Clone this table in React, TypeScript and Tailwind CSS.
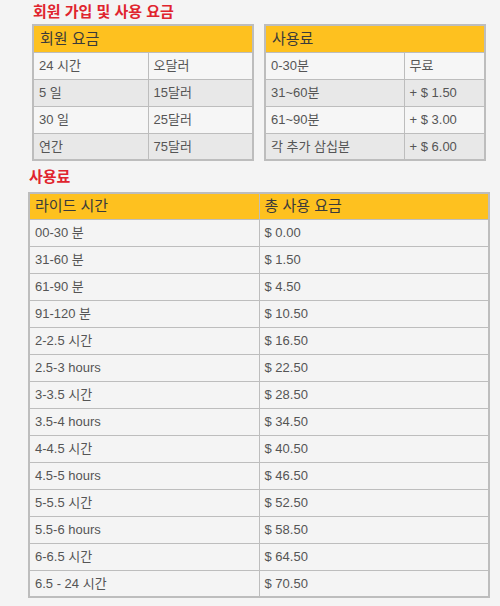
const font = { fontFamily: '"Liberation Sans", "Noto Sans CJK KR", sans-serif' };

const membership = [
  ['24 시간', '오달러'],
  ['5 일', '15달러'],
  ['30 일', '25달러'],
  ['연간', '75달러'],
];

const usage = [
  ['0-30분', '무료'],
  ['31~60분', '+ $ 1.50'],
  ['61~90분', '+ $ 3.00'],
  ['각 추가 삼십분', '+ $ 6.00'],
];

const rides = [
  ['00-30 분', '$ 0.00'],
  ['31-60 분', '$ 1.50'],
  ['61-90 분', '$ 4.50'],
  ['91-120 분', '$ 10.50'],
  ['2-2.5 시간', '$ 16.50'],
  ['2.5-3 hours', '$ 22.50'],
  ['3-3.5 시간', '$ 28.50'],
  ['3.5-4 hours', '$ 34.50'],
  ['4-4.5 시간', '$ 40.50'],
  ['4.5-5 hours', '$ 46.50'],
  ['5-5.5 시간', '$ 52.50'],
  ['5.5-6 hours', '$ 58.50'],
  ['6-6.5 시간', '$ 64.50'],
  ['6.5 - 24 시간', '$ 70.50'],
];

function SmallTable({ title, rows, firstCol }: { title: string; rows: string[][]; firstCol: string }) {
  return (
    <table className="w-[222px] border-collapse border-2 border-[#bdbdbd] text-[13px] text-[#555]">
      <thead>
        <tr>
          <th colSpan={2} className="h-[27px] bg-[#fec11f] px-[6px] text-left text-[15px] font-normal text-[#3a3a3a]">
            {title}
          </th>
        </tr>
      </thead>
      <tbody>
        {rows.map((r, i) => (
          <tr key={i} className={i % 2 === 0 ? 'bg-[#f6f6f6]' : 'bg-[#e8e8e8]'}>
            <td className={`h-[27px] border border-[#bdbdbd] px-[5px] ${firstCol}`}>{r[0]}</td>
            <td className="h-[27px] border border-[#bdbdbd] px-[5px]">{r[1]}</td>
          </tr>
        ))}
      </tbody>
    </table>
  );
}

export default function App() {
  return (
    <div className="min-h-[606px] w-[500px] bg-[#f4f4f4]" style={font}>
      <h2 className="pl-[33px] pt-[2px] text-[15px] font-semibold leading-[20px] text-[#e0242e]">회원 가입 및 사용 요금</h2>
      <div className="mt-[2px] flex gap-[10px] pl-[32px]">
        <SmallTable title="회원 요금" rows={membership} firstCol="w-[115px]" />
        <SmallTable title="사용료" rows={usage} firstCol="w-[139px]" />
      </div>
      <h2 className="mt-[6px] pl-[29px] text-[15px] font-semibold leading-[20px] text-[#e0242e]">사용료</h2>
      <div className="mt-[5px] pl-[28px]">
        <table className="w-[462px] border-collapse border-2 border-[#bdbdbd] text-[13px] text-[#555]">
          <thead>
            <tr className="bg-[#fec11f] text-[15px] text-[#3a3a3a]">
              <th className="h-[26px] w-[230px] border border-[#bdbdbd] px-[5px] text-left font-normal">라이드 시간</th>
              <th className="h-[26px] border border-[#bdbdbd] px-[5px] text-left font-normal">총 사용 요금</th>
            </tr>
          </thead>
          <tbody>
            {rides.map((r, i) => (
              <tr key={i} className="bg-[#f4f4f4]">
                <td className="h-[27px] border border-[#bdbdbd] px-[5px]">{r[0]}</td>
                <td className="h-[27px] border border-[#bdbdbd] px-[5px]">{r[1]}</td>
              </tr>
            ))}
          </tbody>
        </table>
      </div>
    </div>
  );
}
